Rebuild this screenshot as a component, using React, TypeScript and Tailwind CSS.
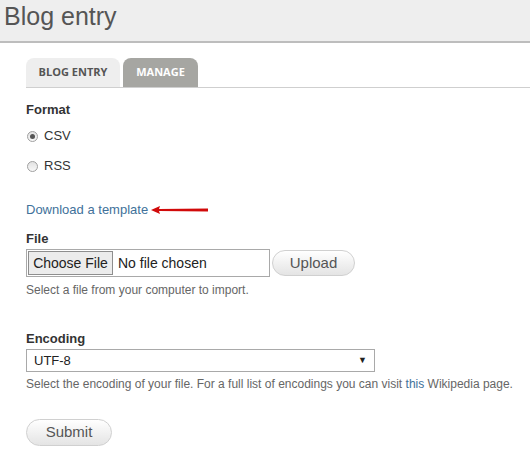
export default function App() {
  return (
    <div className="w-[530px] h-[464px] bg-white font-['Liberation_Sans',Arial,sans-serif] text-[13px] text-[#333] overflow-hidden">
      {/* page title */}
      <header className="h-[43px] bg-[#eeeeee] border-b-2 border-[#bdbdbd] pl-[4px]">
        <h1 className="text-[25px] leading-[33px] text-[#555]">Blog entry</h1>
      </header>

      <div className="pl-[26px]">
        {/* tabs */}
        <nav className="mt-[15px] flex items-end gap-[3px] border-b border-[#cfcfcf] font-['Open_Sans',sans-serif] text-[11px] font-bold uppercase">
          <span className="flex h-[29px] w-[94px] items-center justify-center rounded-t-[8px] bg-[#eeeeee] text-[#555]">Blog entry</span>
          <span className="flex h-[29px] w-[75px] items-center justify-center rounded-t-[8px] bg-[#a6a6a2] text-white">Manage</span>
        </nav>

        {/* format */}
        <div className="mt-[14px] font-bold leading-[16px]">Format</div>
        <div className="flex flex-col">
          <Radio label="CSV" checked className="mt-[10px]" />
          <Radio label="RSS" className="mt-[14px]" />
        </div>

        <div className="mt-[28px] flex items-center h-[16px]">
          <a className="text-[#41719a] text-[13px]">Download a template</a>
          <svg width="60" height="10" viewBox="0 0 60 10" className="ml-[2px]">
            <path d="M1 5 L10 1 L9 4 L58 3.5 L58 6.5 L9 6 L10 9 Z" fill="#d10a0a" />
          </svg>
        </div>

        {/* file */}
        <div className="mt-[13px] font-bold leading-[16px]">File</div>
        <div className="mt-[2px] flex items-center gap-[2px]">
          <div className="flex h-[28px] w-[244px] items-center border border-[#a9a9a9] pl-[1px] text-[14px]">
            <span className="flex h-[24px] w-[85px] items-center justify-center border border-[#8e8e8e] bg-[#ececec] text-[#222]">Choose File</span>
            <span className="ml-[5px] text-[#222]">No file chosen</span>
          </div>
          <button className="h-[26px] w-[83px] rounded-full border border-[#d0d0d0] bg-gradient-to-b from-white to-[#e4e4e4] text-[15px] text-[#555]">Upload</button>
        </div>
        <p className="mt-[6px] text-[12px] text-[#666] leading-[15px]">Select a file from your computer to import.</p>

        {/* encoding */}
        <div className="mt-[33px] font-bold leading-[16px]">Encoding</div>
        <div className="mt-[2px] flex h-[23px] w-[349px] items-center justify-between border border-[#a9a9a9] px-[7px] text-[13px] text-[#222]">
          <span>UTF-8</span>
          <span className="text-[9px]">▼</span>
        </div>
        <p className="mt-[5px] text-[12px] text-[#666] leading-[15px] whitespace-nowrap">
          Select the encoding of your file. For a full list of encodings you can visit <a className="text-[#41719a]">this</a> Wikipedia page.
        </p>

        <button className="mt-[27px] h-[27px] w-[86px] rounded-full border border-[#d0d0d0] bg-gradient-to-b from-white to-[#e4e4e4] text-[15px] text-[#555]">Submit</button>
      </div>
    </div>
  );
}

function Radio({ label, checked, className = "" }: { label: string; checked?: boolean; className?: string }) {
  return (
    <label className={`flex items-center gap-[6px] h-[16px] ${className}`}>
      <span className="ml-[1px] flex h-[11px] w-[11px] items-center justify-center rounded-full border border-[#a0a0a0] bg-gradient-to-b from-[#e2e2e2] to-[#f8f8f8]">
        {checked && <span className="h-[5px] w-[5px] rounded-full bg-[#555]" />}
      </span>
      <span className="text-[13px] text-[#333]">{label}</span>
    </label>
  );
}
